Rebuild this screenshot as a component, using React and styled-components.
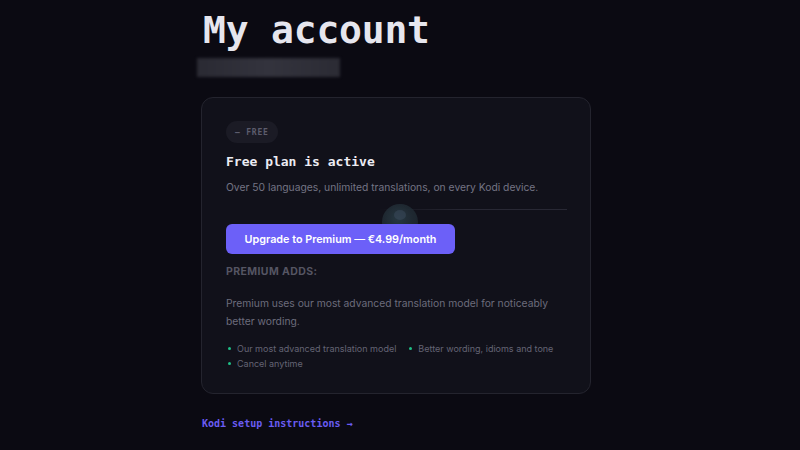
import React from "react";
import styled, { createGlobalStyle } from "styled-components";

const Global = createGlobalStyle`
  html, body { margin: 0; padding: 0; background: #0b0a12; }
  body { width: 800px; height: 450px; overflow: hidden; }
`;

const Page = styled.main`
  padding: 6px 0 0 201px;
  display: flex;
  flex-direction: column;
  width: 390px;
`;

const Title = styled.h1`
  margin: 0 0 0 2px;
  font-family: "DejaVu Sans Mono", monospace;
  font-weight: 700;
  font-size: 38px;
  line-height: 48px;
  color: #e6e6ee;
  letter-spacing: -0.2px;
`;

const Redacted = styled.div`
  margin: 4px 0 0 -4px;
  width: 143px;
  height: 19px;
  background: linear-gradient(90deg, #2a2a33 0%, #33333d 50%, #2b2b34 100%);
  filter: blur(1.5px);
`;

const Card = styled.section`
  position: relative;
  margin-top: 20px;
  box-sizing: border-box;
  width: 390px;
  padding: 23px 23px 22px 24px;
  background: #11111a;
  border: 1px solid #24242e;
  border-radius: 12px;
  display: flex;
  flex-direction: column;
  align-items: flex-start;
`;

const Badge = styled.span`
  display: inline-flex;
  align-items: center;
  height: 22px;
  padding: 0 9px;
  border-radius: 11px;
  background: #1b1b25;
  color: #5d5d6d;
  font-family: "DejaVu Sans Mono", monospace;
  font-weight: 700;
  font-size: 8px;
  letter-spacing: 0.8px;
`;

const PlanTitle = styled.h2`
  margin: 10px 0 0;
  font-family: "DejaVu Sans Mono", monospace;
  font-weight: 700;
  font-size: 13px;
  line-height: 18px;
  color: #ececf3;
`;

const Sans = styled.p`
  margin: 0;
  font-family: Inter, "Noto Sans", sans-serif;
  font-size: ${(p) => p.$size || 10.3}px;
  line-height: ${(p) => p.$lh || 18}px;
  color: ${(p) => p.$color || "#747484"};
`;

const Desc = styled(Sans)`
  margin-top: 7px;
`;

const Divider = styled.hr`
  align-self: stretch;
  margin: 13px 0 0;
  border: 0;
  height: 1px;
  background: linear-gradient(90deg, rgba(40,40,52,0) 0%, rgba(40,40,52,0) 45%, #282834 70%, #282834 100%);
`;

const Globe = styled.div`
  position: absolute;
  left: 180px;
  top: 106px;
  width: 36px;
  height: 36px;
  border-radius: 50%;
  background: radial-gradient(circle at 45% 40%, #2b3f49 0%, #222e37 45%, #1b2028 100%);
  opacity: 0.85;
  &::after {
    content: "";
    position: absolute;
    left: 12px;
    top: 6px;
    width: 12px;
    height: 10px;
    border-radius: 50%;
    background: #44566a;
    opacity: 0.5;
  }
`;

const Button = styled.button`
  position: relative;
  margin-top: 14px;
  width: 229px;
  height: 30px;
  border: 0;
  border-radius: 6px;
  background: #6c60f8;
  color: #ffffff;
  font-family: Inter, "Noto Sans", sans-serif;
  font-weight: 600;
  font-size: 10.8px;
  cursor: pointer;
`;

const SectionLabel = styled.h3`
  margin: 11px 0 0;
  font-family: Inter, "Noto Sans", sans-serif;
  font-weight: 700;
  font-size: 10.5px;
  letter-spacing: 0.4px;
  color: #555563;
`;

const Body = styled(Sans)`
  margin-top: 16px;
  width: 330px;
  color: #6c6c7c;
`;

const List = styled.ul`
  margin: 11px 0 0 2px;
  padding: 0;
  list-style: none;
  display: grid;
  grid-template-columns: auto auto;
  column-gap: 13px;
  row-gap: 0;
`;

const Item = styled.li`
  display: flex;
  align-items: center;
  gap: 6px;
  font-family: Inter, "Noto Sans", sans-serif;
  font-size: 9px;
  line-height: 15px;
  color: #646474;
  &::before {
    content: "";
    width: 3px;
    height: 3px;
    border-radius: 50%;
    background: #1fbf86;
    flex: none;
  }
`;

const Link = styled.a`
  margin-top: 24px;
  margin-left: 1px;
  font-family: "DejaVu Sans Mono", monospace;
  font-weight: 700;
  font-size: 10px;
  color: #6a5cf2;
  text-decoration: none;
`;

export default function App() {
  return (
    <>
      <Global />
      <Page>
        <Title>My account</Title>
        <Redacted />
        <Card>
          <Badge>– FREE</Badge>
          <PlanTitle>Free plan is active</PlanTitle>
          <Desc>Over 50 languages, unlimited translations, on every Kodi device.</Desc>
          <Divider />
          <Globe />
          <Button>Upgrade to Premium — €4.99/month</Button>
          <SectionLabel>PREMIUM ADDS:</SectionLabel>
          <Body>
            Premium uses our most advanced translation model for noticeably better wording.
          </Body>
          <List>
            <Item>Our most advanced translation model</Item>
            <Item>Better wording, idioms and tone</Item>
            <Item>Cancel anytime</Item>
          </List>
        </Card>
        <Link href="#">Kodi setup instructions →</Link>
      </Page>
    </>
  );
}
